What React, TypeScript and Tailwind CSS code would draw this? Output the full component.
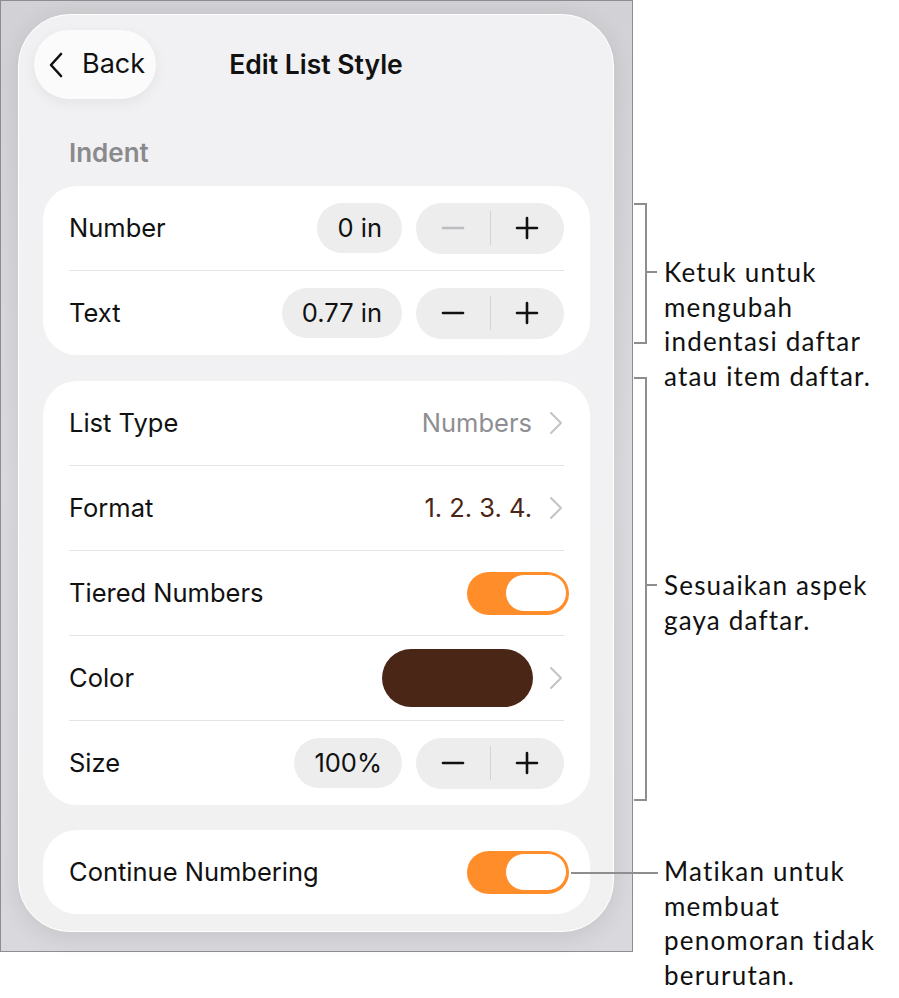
import React from "react";

const UI = { fontFamily: "Inter, 'Noto Sans', sans-serif" };
const ANN = { fontFamily: "Lato, 'Open Sans', sans-serif" };

function Chevron() {
  return (
    <svg width="16" height="24" viewBox="0 0 16 24" className="shrink-0">
      <path d="M3 2 L13 12 L3 22" fill="none" stroke="#c4c4c7" strokeWidth="2" strokeLinecap="round" strokeLinejoin="round" />
    </svg>
  );
}

function Minus({ disabled }: { disabled?: boolean }) {
  return (
    <svg width="24" height="24" viewBox="0 0 24 24">
      <path d="M2 12 H22" stroke={disabled ? "#bcbcbf" : "#111"} strokeWidth="2.6" strokeLinecap="round" />
    </svg>
  );
}
function Plus() {
  return (
    <svg width="24" height="24" viewBox="0 0 24 24">
      <path d="M2 12 H22 M12 2 V22" stroke="#111" strokeWidth="2.6" strokeLinecap="round" />
    </svg>
  );
}

function Stepper({ disabledMinus }: { disabledMinus?: boolean }) {
  return (
    <div className="flex h-[51px] w-[148px] items-center rounded-full bg-[#ededee]">
      <div className="flex flex-1 items-center justify-center">
        <Minus disabled={disabledMinus} />
      </div>
      <div className="h-[34px] w-px bg-[#d3d3d5]" />
      <div className="flex flex-1 items-center justify-center">
        <Plus />
      </div>
    </div>
  );
}

function Pill({ children }: { children: React.ReactNode }) {
  return (
    <div className="flex h-[50px] items-center rounded-full bg-[#ededee] px-[20px] text-[25.5px] text-[#111]">
      {children}
    </div>
  );
}

function Toggle() {
  return (
    <div className="flex h-[43px] w-[102px] items-center justify-end rounded-full bg-[#ff8d2a] pr-[2px]">
      <div className="h-[38px] w-[62px] rounded-full border-[1.5px] border-[#ff8d2a] bg-white" />
    </div>
  );
}

function Row({ label, children, last }: { label: string; children?: React.ReactNode; last?: boolean }) {
  return (
    <div className={"flex items-center justify-between " + (last ? "h-[84px]" : "h-[85px] border-b border-[#e4e4e6]")}>
      <span className="text-[25.5px] text-[#111]">{label}</span>
      <div className="flex items-center">{children}</div>
    </div>
  );
}

export default function App() {
  return (
    <div className="relative h-[998px] w-[899px] bg-white" style={UI}>
      <div className="h-[952px] w-[633px] border border-[#8e8e92] bg-gradient-to-b from-[#d2d2d6] via-[#dcdce0] to-[#d9d9dd] pl-[17px] pr-[17px] pt-[13px]">
        <div className="flex h-[918px] w-[596px] flex-col rounded-[52px] border border-white bg-gradient-to-b from-[#f1f1f3] to-[#f2f1f2] shadow-[0_4px_24px_rgba(0,0,0,0.10)]">
          <div className="mt-[15px] grid h-[69px] grid-cols-[1fr_auto_1fr] items-center px-[15px]">
            <div className="flex">
              <div className="flex h-[69px] w-[122px] items-center gap-[18px] rounded-full bg-[#fbfbfc] pl-[14px] shadow-[0_4px_14px_rgba(0,0,0,0.06)]">
                <svg width="16" height="26" viewBox="0 0 16 26">
                  <path d="M13 2 L3 13 L13 24" fill="none" stroke="#111" strokeWidth="2.6" strokeLinecap="round" strokeLinejoin="round" />
                </svg>
                <span className="text-[27px] text-[#111]">Back</span>
              </div>
            </div>
            <div className="text-[26.5px] font-semibold text-[#111]">Edit List Style</div>
            <div />
          </div>

          <div className="ml-[50px] mt-[38px] text-[26px] font-semibold leading-[31px] text-[#8a8a8e]">Indent</div>

          <div className="ml-[24px] mr-[23px] mt-[18px] flex flex-col gap-[26px]">
            <div className="rounded-[34px] bg-white px-[26px]">
              <Row label="Number">
                <Pill>0 in</Pill>
                <div className="ml-[14px]">
                  <Stepper disabledMinus />
                </div>
              </Row>
              <Row label="Text" last>
                <Pill>0.77 in</Pill>
                <div className="ml-[14px]">
                  <Stepper />
                </div>
              </Row>
            </div>

            <div className="rounded-[34px] bg-white px-[26px]">
              <Row label="List Type">
                <span className="mr-[16px] text-[25.5px] text-[#8e8e93]">Numbers</span>
                <Chevron />
              </Row>
              <Row label="Format">
                <span className="mr-[16px] text-[25.5px] text-[#4a2616]">1. 2. 3. 4.</span>
                <Chevron />
              </Row>
              <Row label="Tiered Numbers">
                <div className="-mr-[5px]">
                  <Toggle />
                </div>
              </Row>
              <Row label="Color">
                <div className="mr-[15px] h-[58px] w-[151px] rounded-full bg-[#4a2616]" />
                <Chevron />
              </Row>
              <Row label="Size" last>
                <Pill>100%</Pill>
                <div className="ml-[14px]">
                  <Stepper />
                </div>
              </Row>
            </div>

            <div className="-mt-px rounded-[34px] bg-white px-[26px]">
              <Row label="Continue Numbering" last>
                <div className="-mr-[5px]">
                  <Toggle />
                </div>
              </Row>
            </div>
          </div>
        </div>
      </div>

      {/* callouts */}
      <div className="absolute left-[634px] top-[203px] h-[141px] w-[13px] border-y-2 border-r-2 border-[#8e8e8e]" />
      <div className="absolute left-[646px] top-[271px] h-[2px] w-[11px] bg-[#8e8e8e]" />
      <div className="absolute left-[634px] top-[377px] h-[424px] w-[13px] border-y-2 border-r-2 border-[#8e8e8e]" />
      <div className="absolute left-[646px] top-[584px] h-[2px] w-[11px] bg-[#8e8e8e]" />
      <div className="absolute left-[571px] top-[872px] h-[2px] w-[87px] bg-[#8e8e8e]" />

      <div className="absolute left-[664px] top-[255px] text-[26px] leading-[34.5px] tracking-[1.2px] text-[#111]" style={ANN}>
        Ketuk untuk<br />mengubah<br />indentasi daftar<br />atau item daftar.
      </div>
      <div className="absolute left-[664px] top-[568px] text-[26px] leading-[34.5px] tracking-[1.2px] text-[#111]" style={ANN}>
        Sesuaikan aspek<br />gaya daftar.
      </div>
      <div className="absolute left-[664px] top-[854px] text-[26px] leading-[34.5px] tracking-[1.2px] text-[#111]" style={ANN}>
        Matikan untuk<br />membuat<br />penomoran tidak<br />berurutan.
      </div>
    </div>
  );
}
